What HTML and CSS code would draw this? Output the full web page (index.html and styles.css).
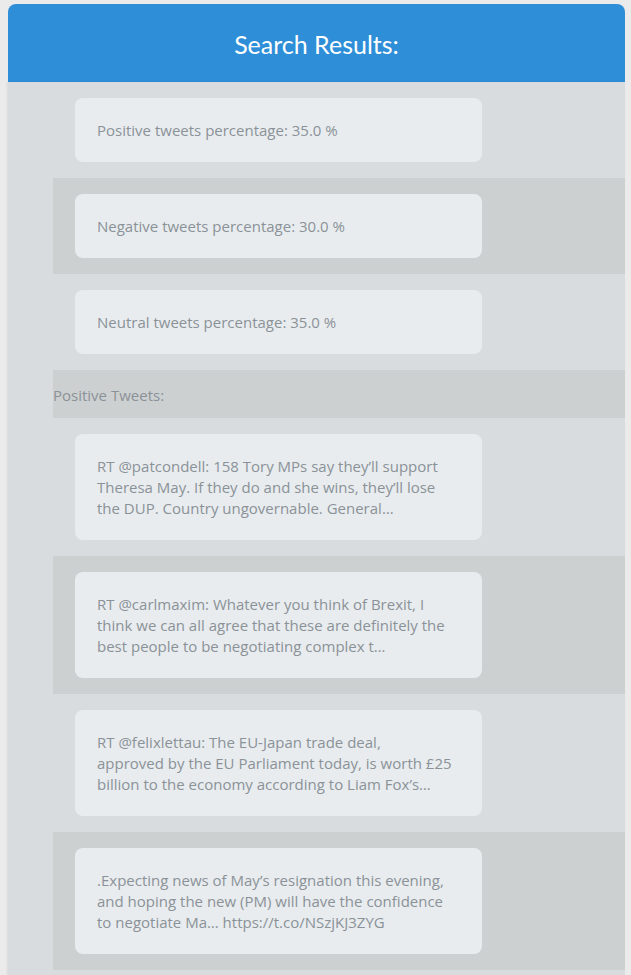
FILE: index.html
```html
<!DOCTYPE html>
<html>
<head>
<meta charset="utf-8">
<link rel="stylesheet" href="styles.css">
</head>
<body>
<div class="page">
  <header class="header">Search Results:</header>
  <main class="panel">
    <div class="row"><div class="card">Positive tweets percentage: 35.0 %</div></div>
    <div class="row alt"><div class="card">Negative tweets percentage: 30.0 %</div></div>
    <div class="row"><div class="card">Neutral tweets percentage: 35.0 %</div></div>
    <div class="row alt label">Positive Tweets:</div>
    <div class="row"><div class="card">RT @patcondell: 158 Tory MPs say they’ll support Theresa May. If they do and she wins, they’ll lose the DUP. Country ungovernable. General…</div></div>
    <div class="row alt"><div class="card">RT @carlmaxim: Whatever you think of Brexit, I think we can all agree that these are definitely the best people to be negotiating complex t…</div></div>
    <div class="row"><div class="card">RT @felixlettau: The EU-Japan trade deal,<br>approved by the EU Parliament today, is worth £25<br>billion to the economy according to Liam Fox’s…</div></div>
    <div class="row alt"><div class="card">.Expecting news of May’s resignation this evening, and hoping the new (PM) will have the confidence to negotiate Ma… https://t.co/NSzjKJ3ZYG</div></div>
  </main>
</div>
</body>
</html>
```
FILE: styles.css
```css
html, body {
  margin: 0;
  padding: 0;
  background: #ebebeb;
}
body {
  padding: 4px 6px 0 8px;
  font-family: "Open Sans", sans-serif;
}
.page {
  display: flex;
  flex-direction: column;
}
.header {
  background: #2e8ed8;
  color: #ffffff;
  font-family: Lato, sans-serif;
  font-size: 25px;
  text-align: center;
  height: 78px;
  line-height: 80px;
  border-radius: 8px 8px 0 0;
}
.panel {
  background: #d8dcdf;
  padding-bottom: 6px;
  box-shadow: -1px 0 2px rgba(0,0,0,0.08);
}
.row {
  margin-left: 45px;
  padding: 16px 22px 16px;
}
.row.alt {
  background: #cdd0d1;
}
.row.label {
  padding: 0;
  height: 48px;
  line-height: 50px;
  color: #8b9297;
  font-size: 15px;
}
.card {
  width: 363px;
  background: #e8ecef;
  border-radius: 8px;
  padding: 22px 22px 21px;
  color: #8b9297;
  font-size: 15px;
  line-height: 21px;
}
```
